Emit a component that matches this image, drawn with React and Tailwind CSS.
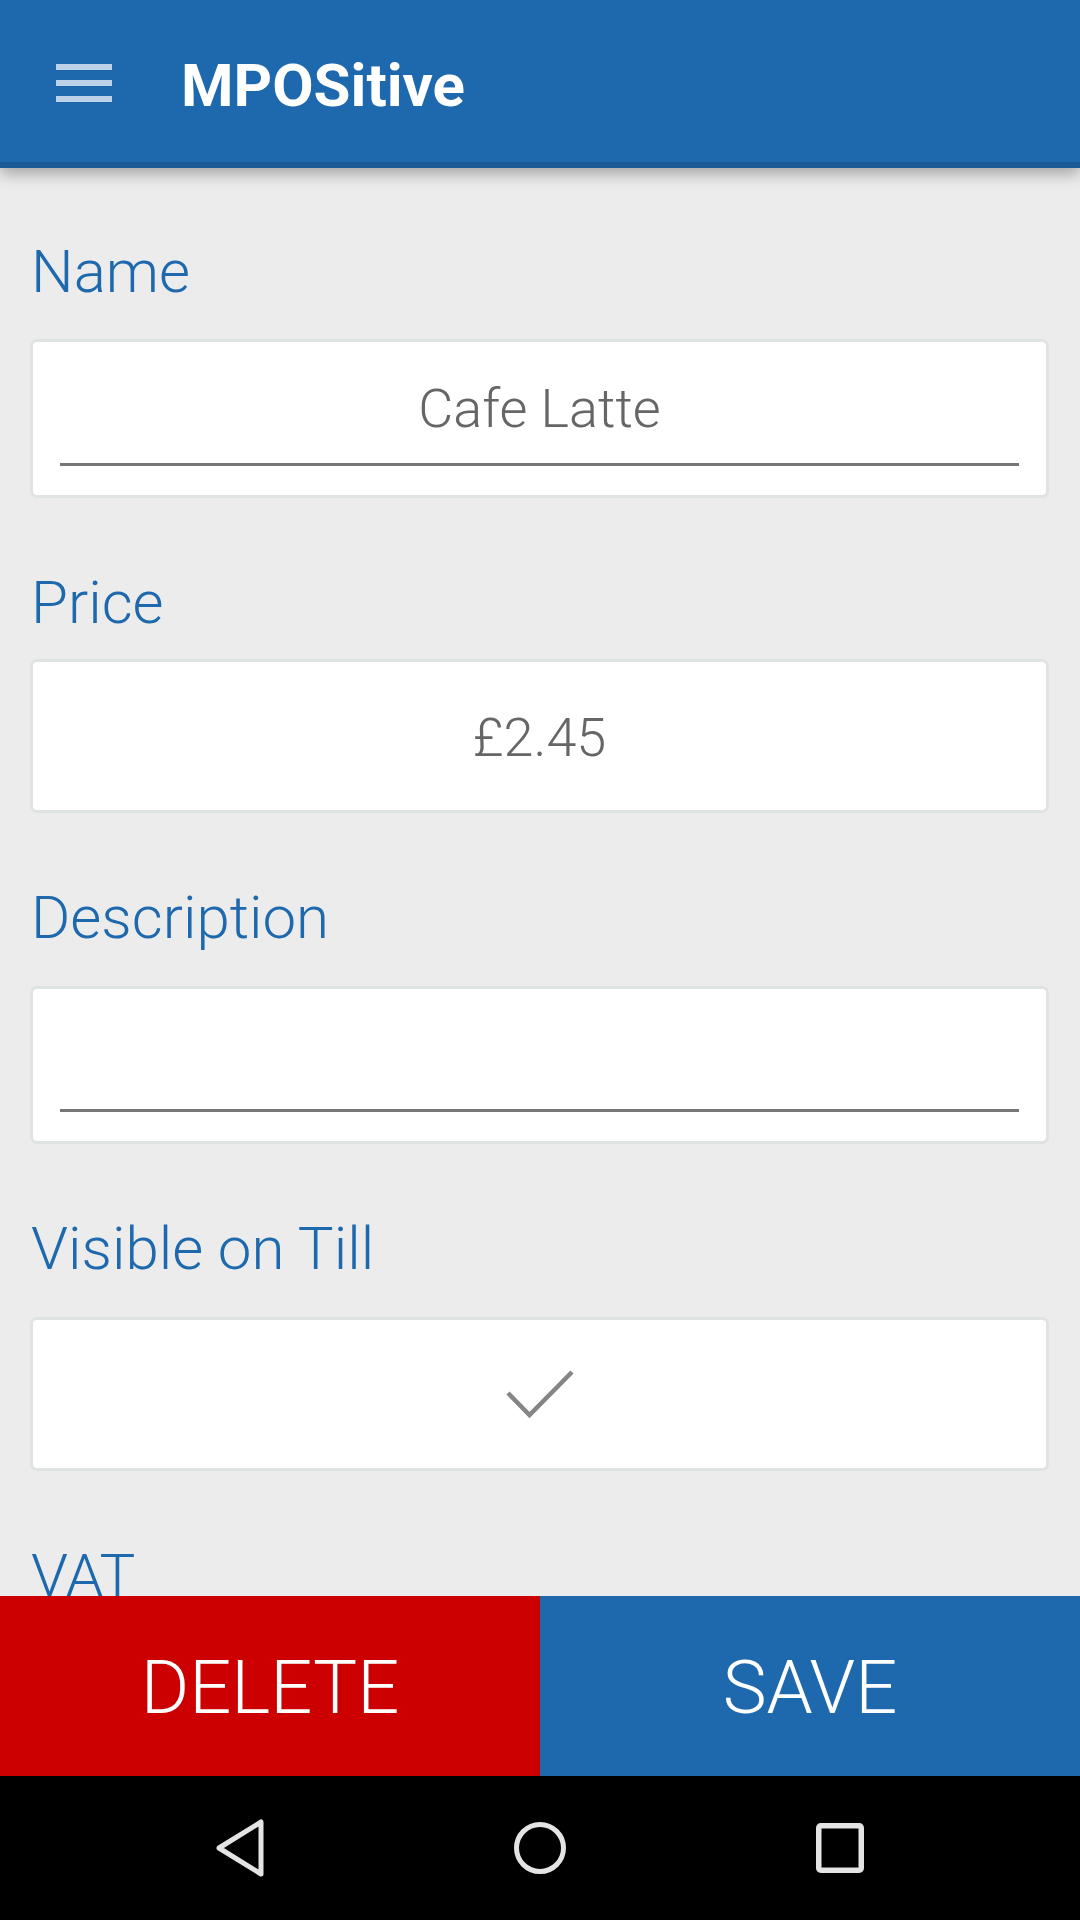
import React from "react";

function Label({ children }) {
  return (
    <div className="h-[60px] text-[60px] leading-[60px] text-[#1e69ad] font-light whitespace-nowrap pl-[1px]">
      {children}
    </div>
  );
}

function Box({ className = "", children }) {
  return (
    <div className={"bg-white border-[3px] border-[#dfe3e3] rounded-[7px] " + className}>
      {children}
    </div>
  );
}

export default function App() {
  return (
    <div className="w-[1080px] h-[1920px] flex flex-col bg-[#ececec] font-[Roboto,sans-serif] overflow-hidden">
      {/* Header */}
      <div className="relative z-10 h-[168px] shrink-0 bg-[#1e69ad] border-b-[6px] border-[#1a5a95] shadow-[0_6px_14px_rgba(0,0,0,0.3)] flex items-start">
        <div className="ml-[56px] mt-[64px] flex flex-col gap-[10px]">
          <div className="w-[56px] h-[6px] bg-[#bcd2e6]" />
          <div className="w-[56px] h-[6px] bg-[#bcd2e6]" />
          <div className="w-[56px] h-[6px] bg-[#bcd2e6]" />
        </div>
        <div className="ml-[69px] mt-[56px] text-[60px] leading-[60px] font-bold text-white">
          MPOSitive
        </div>
      </div>

      {/* Content */}
      <div className="flex-1 overflow-hidden pl-[30px] pr-[31px] pt-[74px] flex flex-col">
        <Label>Name</Label>
        <Box className="mt-[37px] h-[159px] shrink-0 flex flex-col justify-between pb-[29px]">
          <div className="pt-[40px] text-center text-[54px] leading-[54px] font-light text-[#666666]">
            Cafe Latte
          </div>
          <div className="mx-[27px] h-[3px] bg-[#767676]" />
        </Box>

        <div className="mt-[75px]">
          <Label>Price</Label>
        </div>
        <Box className="mt-[26px] h-[154px] shrink-0 flex items-center justify-center pt-[4px]">
          <div className="text-[54px] leading-[54px] font-light text-[#666666]">£2.45</div>
        </Box>

        <div className="mt-[75px]">
          <Label>Description</Label>
        </div>
        <Box className="mt-[38px] h-[158px] shrink-0 flex flex-col justify-end pb-[29px]">
          <div className="mx-[27px] h-[3px] bg-[#767676]" />
        </Box>

        <div className="mt-[75px]">
          <Label>Visible on Till</Label>
        </div>
        <Box className="mt-[38px] h-[154px] shrink-0 flex items-center justify-center">
          <svg width="68" height="50" viewBox="0 0 68 50">
            <polyline points="2,24 23.5,46 66,3" fill="none" stroke="#858585" strokeWidth="4.5" />
          </svg>
        </Box>

        <div className="mt-[75px]">
          <Label>VAT</Label>
        </div>
      </div>

      {/* Buttons */}
      <div className="h-[180px] shrink-0 flex">
        <div className="flex-1 bg-[#cc0000] flex items-center justify-center pt-[4px]">
          <span className="text-[74px] leading-[74px] font-light text-white">DELETE</span>
        </div>
        <div className="flex-1 bg-[#1e69ad] flex items-center justify-center pt-[4px]">
          <span className="text-[74px] leading-[74px] font-light text-white">SAVE</span>
        </div>
      </div>

      {/* Nav bar */}
      <div className="h-[144px] shrink-0 bg-black flex justify-center items-center">
        <div className="w-[300px] flex justify-center">
          <svg width="50" height="58" viewBox="0 0 50 58">
            <path d="M46 3 L46 55 L4 29 Z" fill="none" stroke="#e4e4e4" strokeWidth="5" strokeLinejoin="round" />
          </svg>
        </div>
        <div className="w-[300px] flex justify-center">
          <svg width="54" height="54" viewBox="0 0 54 54">
            <circle cx="27" cy="27" r="23.5" fill="none" stroke="#e4e4e4" strokeWidth="5" />
          </svg>
        </div>
        <div className="w-[300px] flex justify-center">
          <svg width="48" height="50" viewBox="0 0 48 50">
            <rect x="2.75" y="2.75" width="42.5" height="44.5" rx="2" fill="none" stroke="#e4e4e4" strokeWidth="5.5" />
          </svg>
        </div>
      </div>
    </div>
  );
}
